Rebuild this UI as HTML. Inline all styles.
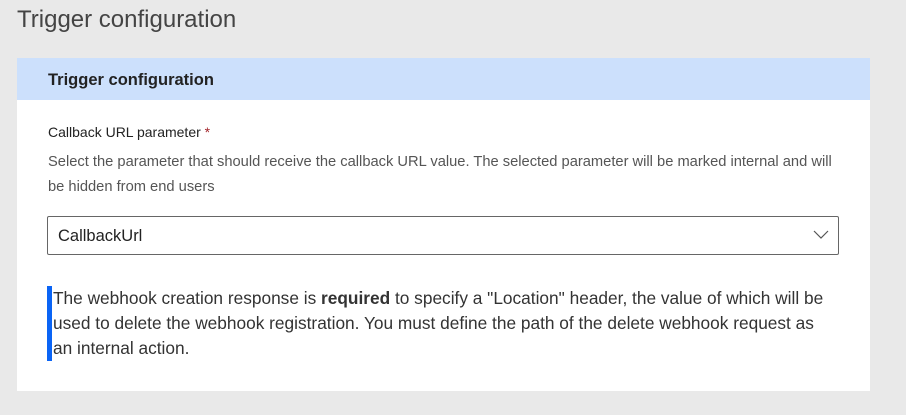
<!DOCTYPE html>
<html><head><style>
body{margin:0;width:906px;height:415px;background:#e9e9e9;font-family:"Liberation Sans",sans-serif;overflow:hidden;position:relative}
.t{position:absolute;left:17px;top:6px;font-size:24px;color:#444;font-weight:300;white-space:nowrap}
.p{position:absolute;left:17px;top:58px;width:853px;height:333px;background:#fff}
.h{height:42px;background:#cce0fc;font-weight:bold;font-size:16.5px;color:#222;line-height:44px;padding-left:31px}
.l{position:absolute;left:31px;top:66px;font-size:14px;color:#222}
.l span{color:#a4262c}
.d{position:absolute;left:31px;top:92px;width:820px;font-size:14.7px;color:#555;line-height:25px;white-space:nowrap}
.s{position:absolute;left:30px;top:158px;height:37px;border:1px solid #666;border-radius:2px;font-size:16.5px;color:#222;line-height:38px;padding-left:10px;width:780px}
.s svg{position:absolute;right:9px;top:13px}
.n{position:absolute;left:30px;top:228px;width:810px;border-left:5px solid #0a64f5;font-size:17.3px;color:#333;line-height:25px;padding-left:1px;white-space:nowrap}
</style></head><body>
<div class="t">Trigger configuration</div>
<div class="p">
<div class="h">Trigger configuration</div>
<div class="l">Callback URL parameter <span>*</span></div>
<div class="d">Select the parameter that should receive the callback URL value. The selected parameter will be marked internal and will<br>be hidden from end users</div>
<div class="s">CallbackUrl<svg width="16" height="10" viewBox="0 0 16 10"><path d="M1 1l7 7 7-7" fill="none" stroke="#555" stroke-width="1.2"/></svg></div>
<div class="n">The webhook creation response is <b>required</b> to specify a "Location" header, the value of which will be<br>used to delete the webhook registration. You must define the path of the delete webhook request as<br>an internal action.</div>
</div>
</body></html>
